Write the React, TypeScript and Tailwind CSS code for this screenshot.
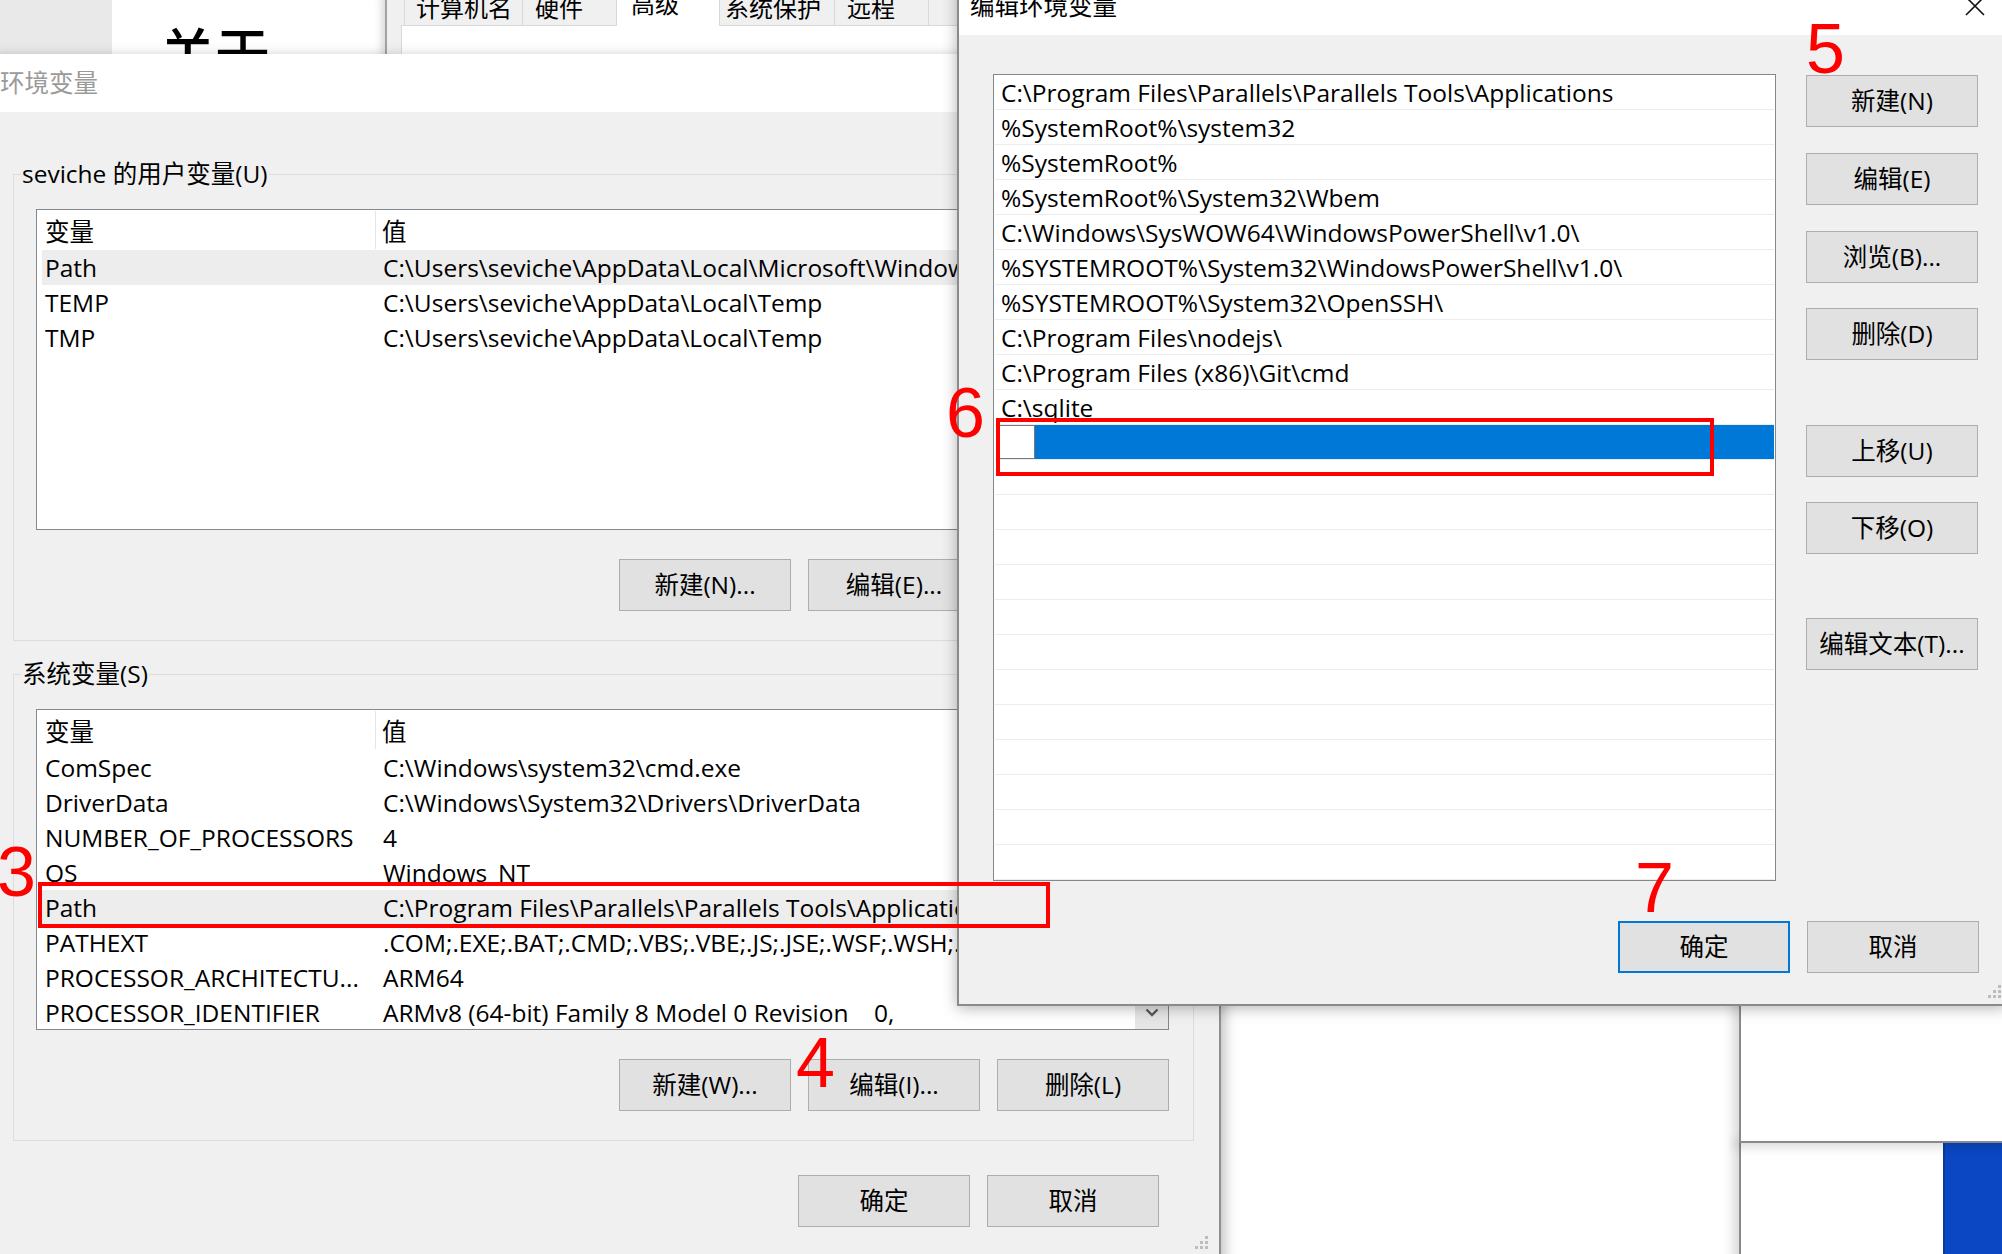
import React from "react";

type VarRow = { name: string; value: string; hl?: boolean };

const userRows: VarRow[] = [
  { name: "Path", value: "C:\\Users\\seviche\\AppData\\Local\\Microsoft\\WindowsApps;", hl: true },
  { name: "TEMP", value: "C:\\Users\\seviche\\AppData\\Local\\Temp" },
  { name: "TMP", value: "C:\\Users\\seviche\\AppData\\Local\\Temp" },
];

const systemRows: VarRow[] = [
  { name: "ComSpec", value: "C:\\Windows\\system32\\cmd.exe" },
  { name: "DriverData", value: "C:\\Windows\\System32\\Drivers\\DriverData" },
  { name: "NUMBER_OF_PROCESSORS", value: "4" },
  { name: "OS", value: "Windows_NT" },
  {
    name: "Path",
    value: "C:\\Program Files\\Parallels\\Parallels Tools\\Applications;%SystemRoot%\\system32;%SystemRoot%;",
    hl: true,
  },
  { name: "PATHEXT", value: ".COM;.EXE;.BAT;.CMD;.VBS;.VBE;.JS;.JSE;.WSF;.WSH;.MSC" },
  { name: "PROCESSOR_ARCHITECTU...", value: "ARM64" },
  { name: "PROCESSOR_IDENTIFIER", value: "ARMv8 (64-bit) Family 8 Model 0 Revision    0," },
];

const pathEntries = [
  "C:\\Program Files\\Parallels\\Parallels Tools\\Applications",
  "%SystemRoot%\\system32",
  "%SystemRoot%",
  "%SystemRoot%\\System32\\Wbem",
  "C:\\Windows\\SysWOW64\\WindowsPowerShell\\v1.0\\",
  "%SYSTEMROOT%\\System32\\WindowsPowerShell\\v1.0\\",
  "%SYSTEMROOT%\\System32\\OpenSSH\\",
  "C:\\Program Files\\nodejs\\",
  "C:\\Program Files (x86)\\Git\\cmd",
  "C:\\sqlite",
];

const WinButton = ({ label, focus }: { label: string; focus?: boolean }) => (
  <div
    className={`flex h-[52px] w-[172px] shrink-0 items-center justify-center bg-[#e1e1e1] ${
      focus ? "border-2 border-[#0078d7]" : "border border-[#adadad]"
    }`}
  >
    {label}
  </div>
);

const SizeGrip = () => (
  <svg width="16" height="16" viewBox="0 0 16 16" fill="#bdbdbd">
    <rect x="12" y="1" width="3" height="3" />
    <rect x="12" y="6" width="3" height="3" />
    <rect x="7" y="6" width="3" height="3" />
    <rect x="12" y="11" width="3" height="3" />
    <rect x="7" y="11" width="3" height="3" />
    <rect x="2" y="11" width="3" height="3" />
  </svg>
);

const VarTable = ({ rows, scroll }: { rows: VarRow[]; scroll?: boolean }) => (
  <div className="flex h-[321px] w-[1133px] border border-[#828790] bg-white">
    <div className="flex min-w-0 flex-1 flex-col overflow-hidden">
      <div className="flex h-[40px] shrink-0 items-center">
        <div className="flex h-[38px] w-[339px] shrink-0 items-center border-r border-[#e5e5e5] pl-[8px] pt-[3px]">
          变量
        </div>
        <div className="pl-[6px] pt-[3px]">值</div>
      </div>
      {rows.map((r) => (
        <div
          key={r.name}
          className={`ml-[5px] flex h-[35px] shrink-0 items-center ${r.hl ? "bg-[#ededed]" : ""}`}
        >
          <div className="w-[334px] shrink-0 overflow-hidden whitespace-nowrap pl-[3px]">{r.name}</div>
          <div className="overflow-hidden whitespace-pre pl-[7px]">{r.value}</div>
        </div>
      ))}
    </div>
    {scroll && (
      <div className="flex w-[33px] shrink-0 flex-col justify-end bg-[#f4f4f4]">
        <div className="flex h-[34px] items-center justify-center bg-[#e6e6e6]">
          <svg width="14" height="9" viewBox="0 0 14 9">
            <path d="M1.5 1.5L7 7L12.5 1.5" fill="none" stroke="#5a5a5a" strokeWidth="2.4" />
          </svg>
        </div>
      </div>
    )}
  </div>
);

const GroupBox = ({
  label,
  rows,
  buttons,
  scroll,
}: {
  label: string;
  rows: VarRow[];
  buttons: string[];
  scroll?: boolean;
}) => (
  <div className="relative flex h-[467px] w-[1181px] shrink-0 flex-col border border-[#dcdcdc]">
    <span className="absolute left-[7px] top-[-18px] bg-[#f0f0f0] px-[1px]">{label}</span>
    <div className="ml-[22px] mt-[34px]">
      <VarTable rows={rows} scroll={scroll} />
    </div>
    <div className="ml-[22px] mt-[29px] flex w-[1133px] justify-end gap-[17px]">
      {buttons.map((b) => (
        <WinButton key={b} label={b} />
      ))}
    </div>
  </div>
);

export default function App() {
  return (
    <div className="relative h-[1254px] w-[2002px] overflow-hidden bg-white font-['Open_Sans','Noto_Sans_CJK_SC',sans-serif] text-[24.5px] leading-[34px] text-black">
      {/* windows further back */}
      <div className="absolute left-0 top-0 h-[60px] w-[112px] bg-[#e9e9e9]" />
      <div className="absolute left-[112px] top-0 h-[60px] w-[275px] overflow-hidden border-r-2 border-[#a3a3a3] bg-white shadow-[inset_-10px_0_10px_-8px_rgba(0,0,0,0.2)]">
        <div className="ml-[48px] mt-[25px] text-[55px] font-medium leading-none">关于</div>
      </div>

      <div className="absolute left-[387px] top-[-20px] flex h-[80px] w-[600px] flex-col bg-[#f0f0f0] text-[24px]">
        <div className="flex h-[45px] shrink-0 items-end pl-[17px]">
          <div className="flex h-[36px] w-[119px] items-center border border-b-0 border-[#d9d9d9] pl-[11px]">
            计算机名
          </div>
          <div className="flex h-[36px] w-[94px] items-center border border-b-0 border-l-0 border-[#d9d9d9] pl-[12px]">
            硬件
          </div>
          <div className="relative z-10 mb-[-1px] flex h-[46px] w-[103px] items-start border border-b-0 border-l-0 border-[#d9d9d9] bg-white pl-[14px] pt-[6px]">
            高级
          </div>
          <div className="flex h-[36px] w-[115px] items-center border border-b-0 border-l-0 border-[#d9d9d9] pl-[5px]">
            系统保护
          </div>
          <div className="flex h-[36px] w-[94px] items-center border border-b-0 border-l-0 border-[#d9d9d9] pl-[12px]">
            远程
          </div>
        </div>
        <div className="ml-[14px] flex-1 border-l border-t border-[#d9d9d9] bg-white" />
      </div>

      <div className="absolute left-[1739px] top-[1141px] h-[150px] w-[300px] border-l-2 border-[#8a8a8a] bg-white shadow-[-6px_0_10px_rgba(0,0,0,0.15)]">
        <div className="ml-[202px] mt-[-1px] h-[120px] w-[70px] border-l-2 border-t border-[#0a3a9c] bg-[#0b47c2]" />
      </div>
      <div className="absolute left-[1739px] top-[898px] h-[245px] w-[300px] border-b-2 border-l-2 border-[#8a8a8a] bg-white shadow-[-6px_4px_10px_rgba(0,0,0,0.15)]" />

      {/* 环境变量 dialog */}
      <div className="absolute left-[-10px] top-[54px] flex h-[1220px] w-[1231px] flex-col border-r-2 border-[#8e8e8e] bg-[#f0f0f0] shadow-[4px_2px_12px_rgba(0,0,0,0.25)]">
        <div className="flex h-[58px] shrink-0 items-center bg-white pl-[10px] text-[#9a9a9a]">环境变量</div>
        <div className="flex flex-col pl-[23px] pt-[62px]">
          <GroupBox
            label="seviche 的用户变量(U)"
            rows={userRows}
            buttons={["新建(N)...", "编辑(E)...", "删除(D)"]}
          />
          <div className="mt-[33px]">
            <GroupBox
              label="系统变量(S)"
              rows={systemRows}
              buttons={["新建(W)...", "编辑(I)...", "删除(L)"]}
              scroll
            />
          </div>
          <div className="mt-[34px] flex w-[1181px] justify-end gap-[17px] pr-[35px]">
            <WinButton label="确定" />
            <WinButton label="取消" />
          </div>
          <div className="mt-[8px] flex w-[1196px] justify-end">
            <SizeGrip />
          </div>
        </div>
      </div>

      {/* 编辑环境变量 dialog */}
      <div className="absolute left-[957px] top-[-23px] flex h-[1029px] w-[1050px] flex-col border-b-2 border-l-2 border-[#8a8a8a] bg-[#f0f0f0] shadow-[0_2px_14px_rgba(0,0,0,0.3)]">
        <div className="flex h-[58px] shrink-0 items-center justify-between bg-white pl-[11px] pr-[22px]">
          <span>编辑环境变量</span>
          <svg width="20" height="20" viewBox="0 0 20 20">
            <path d="M1 1L19 19M19 1L1 19" stroke="#111" strokeWidth="1.6" />
          </svg>
        </div>
        <div className="flex flex-col pl-[34px] pt-[39px]">
          <div className="flex">
            <div className="flex h-[807px] w-[783px] shrink-0 flex-col border border-[#828790] bg-white px-[1px]">
              {Array.from({ length: 23 }).map((_, i) =>
                i === 10 ? (
                  <div key={i} className="flex h-[35px] shrink-0 border-b border-[#ececec]">
                    <div className="w-[4px]" />
                    <div className="w-[36px] border border-[#7a7a7a] bg-white" />
                    <div className="flex-1 bg-[#0078d7]" />
                  </div>
                ) : (
                  <div
                    key={i}
                    className="flex h-[35px] shrink-0 items-center whitespace-nowrap border-b border-[#ececec] pl-[6px] pt-[2px]"
                  >
                    {pathEntries[i] ?? ""}
                  </div>
                )
              )}
            </div>
            <div className="ml-[30px] flex flex-col pt-[1px]">
              <WinButton label="新建(N)" />
              <div className="mt-[26px]">
                <WinButton label="编辑(E)" />
              </div>
              <div className="mt-[26px]">
                <WinButton label="浏览(B)..." />
              </div>
              <div className="mt-[25px]">
                <WinButton label="删除(D)" />
              </div>
              <div className="mt-[65px]">
                <WinButton label="上移(U)" />
              </div>
              <div className="mt-[25px]">
                <WinButton label="下移(O)" />
              </div>
              <div className="mt-[64px]">
                <WinButton label="编辑文本(T)..." />
              </div>
            </div>
          </div>
          <div className="mt-[40px] flex w-[986px] justify-end gap-[17px]">
            <WinButton label="确定" focus />
            <WinButton label="取消" />
          </div>
          <div className="mt-[11px] flex w-[1009px] justify-end">
            <SizeGrip />
          </div>
        </div>
      </div>

      {/* red annotations */}
      <div className="absolute left-[38px] top-[882px] h-[46px] w-[1012px] border-4 border-[#ff0000]" />
      <div className="absolute left-[996px] top-[418px] h-[58px] w-[718px] border-4 border-[#ff0000]" />
      <div className="absolute left-[-3px] top-[837px] font-['Liberation_Sans',sans-serif] text-[70px] leading-none text-[#ff0000]">
        3
      </div>
      <div className="absolute left-[796px] top-[1028px] font-['Liberation_Sans',sans-serif] text-[70px] leading-none text-[#ff0000]">
        4
      </div>
      <div className="absolute left-[1806px] top-[14px] font-['Liberation_Sans',sans-serif] text-[70px] leading-none text-[#ff0000]">
        5
      </div>
      <div className="absolute left-[946px] top-[378px] font-['Liberation_Sans',sans-serif] text-[70px] leading-none text-[#ff0000]">
        6
      </div>
      <div className="absolute left-[1635px] top-[853px] font-['Liberation_Sans',sans-serif] text-[70px] leading-none text-[#ff0000]">
        7
      </div>
    </div>
  );
}
